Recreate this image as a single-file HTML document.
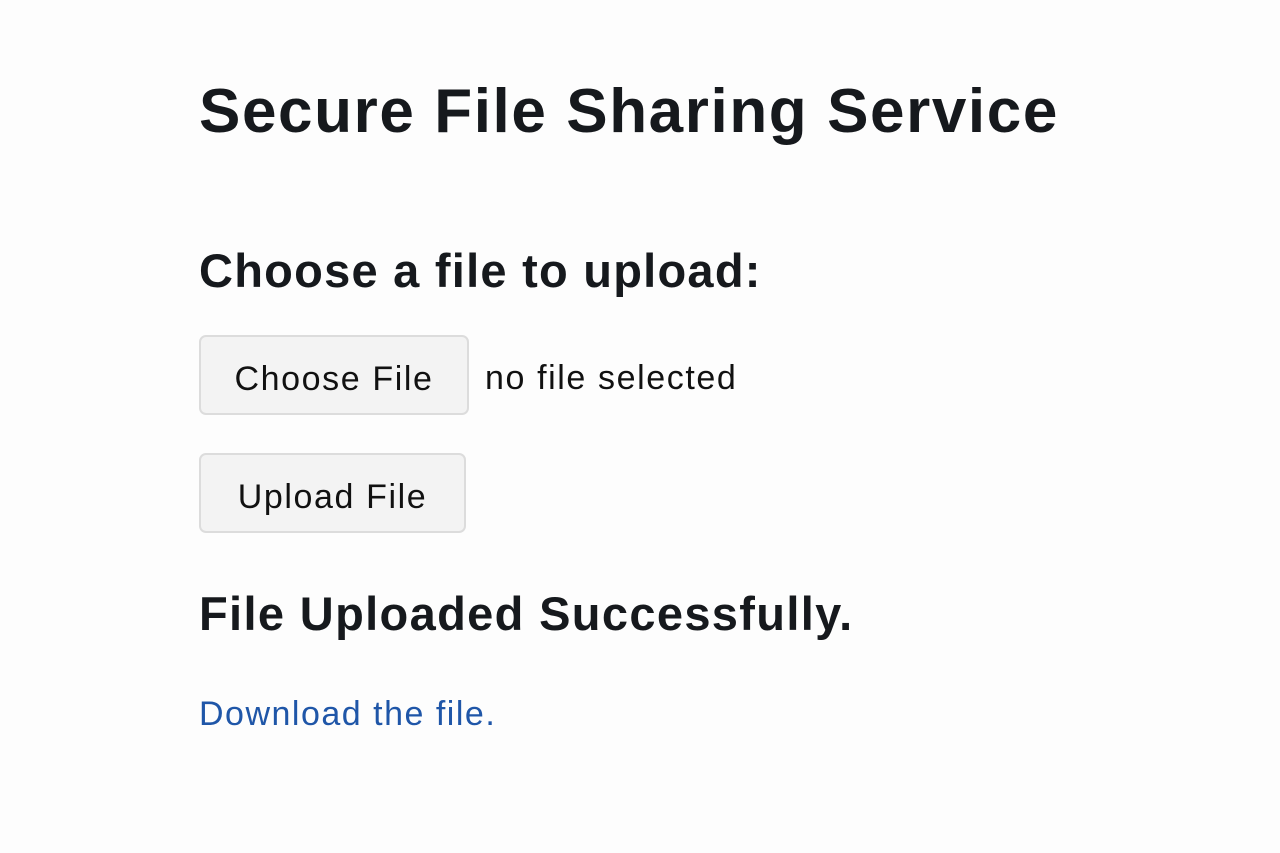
<!DOCTYPE html>
<html><head><style>
body{margin:0;background:#fdfdfd;font-family:"Liberation Sans",sans-serif;color:#16191d;}
.t{position:absolute;left:199px;white-space:nowrap;font-weight:bold;}
.btn{position:absolute;left:199px;height:76px;border:2px solid #dcdcdc;border-radius:7px;background:#f3f3f3;font-size:34px;line-height:84px;text-align:center;color:#111;box-sizing:content-box;letter-spacing:1.6px;}
</style></head><body>
<div class="t" style="top:76px;font-size:62px;letter-spacing:1.6px">Secure File Sharing Service</div>
<div class="t" style="top:243px;font-size:47px;letter-spacing:1.25px">Choose a file to upload:</div>
<div class="btn" style="top:335px;width:266px">Choose File</div>
<div style="position:absolute;left:485px;top:359px;font-size:34px;color:#111;letter-spacing:1.6px">no file selected</div>
<div class="btn" style="top:453px;width:263px">Upload File</div>
<div class="t" style="top:586px;font-size:47px;letter-spacing:1.35px">File Uploaded Successfully.</div>
<div style="position:absolute;left:199px;top:695px;font-size:34px;color:#1f56a8;letter-spacing:1.5px">Download the file.</div>
</body></html>
